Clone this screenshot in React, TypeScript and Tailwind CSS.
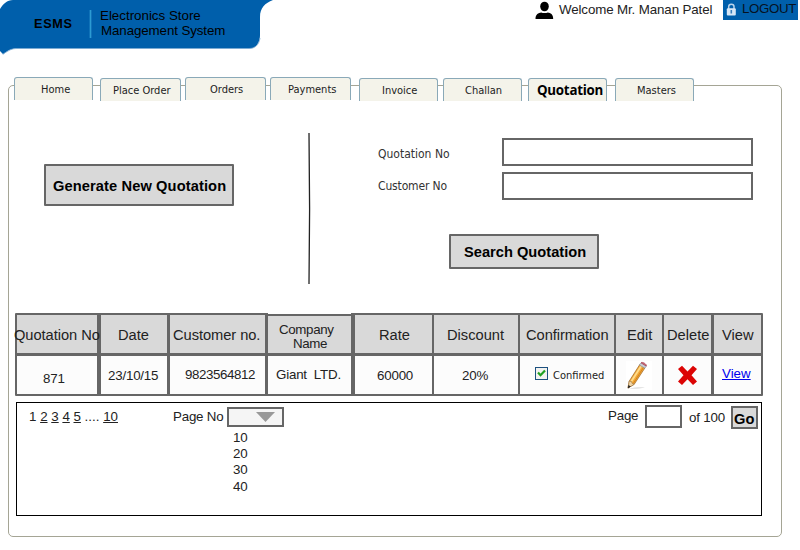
import type { ReactNode } from "react";

const sans = "font-['Liberation_Sans',Arial,sans-serif]";
const condensed = "font-['DejaVu_Sans_Condensed','DejaVu_Sans',sans-serif]";

function Label({ className = "", children }: { className?: string; children: ReactNode }) {
  return <span className={`block shrink-0 whitespace-pre leading-4 ${className}`}>{children}</span>;
}

const tabs = [
  { label: "Home", box: "w-[79px]", text: "ml-[26px]" },
  { label: "Place Order", box: "ml-[7px] mt-px w-[81px]", text: "ml-[12px]" },
  { label: "Orders", box: "ml-1 w-[81px]", text: "ml-[24px]" },
  { label: "Payments", box: "ml-1 w-[81px]", text: "ml-[17px]" },
  { label: "Invoice", box: "ml-2 mt-px w-[79px]", text: "ml-[22px]" },
  { label: "Challan", box: "ml-[5px] mt-px w-[79px]", text: "ml-[21px]" },
  { label: "Quotation", box: "ml-1.5 mt-px w-[79px]", text: "ml-[8px]", active: true },
  { label: "Masters", box: "ml-2 mt-px w-[79px]", text: "ml-[21px]" },
];

function Tabs() {
  return (
    <nav className="-mt-[9px] ml-[5px] flex h-[23px] items-start">
      {tabs.map((t) => (
        <div
          key={t.label}
          className={`h-[23px] shrink-0 rounded-t-[3px] border border-b-0 border-[#8aa9b8] bg-[#f4f3ea] ${t.box}`}
        >
          <Label
            className={
              t.active
                ? `mt-[3px] font-['Open_Sans','Noto_Sans',sans-serif] text-[13.33px] font-bold tracking-[-0.25px] text-black ${t.text}`
                : `mt-[4px] text-[11px] text-[#222] ${condensed} ${t.text}`
            }
          >
            {t.label}
          </Label>
        </div>
      ))}
    </nav>
  );
}

function Column({
  width,
  head,
  children,
  lowered = false,
}: {
  width: string;
  head: ReactNode;
  children: ReactNode;
  lowered?: boolean;
}) {
  return (
    <div className={`flex h-[83px] shrink-0 flex-col pt-[2px] ${lowered ? "border-t border-white" : ""} ${width}`}>
      <div className={`flex items-start bg-[#d9d9d9] ${lowered ? "h-[37px]" : "h-[38px]"}`}>{head}</div>
      <div className="mt-[3px] flex h-[38px] items-start bg-[#fcfcfc]">{children}</div>
    </div>
  );
}

function Banner() {
  return (
    <div className="relative h-[56px] w-[276px] shrink-0">
      <svg className="absolute inset-0" width="276" height="56" viewBox="0 0 276 56">
        <path
          d="M0 9C3 4 7 0 13 0H273C265 3 260 8 260 17V35C260 43 256 48.5 249 48.5H17C12 48.5 8 50 3 54.5L0 51Z"
          fill="#005fab"
        />
        <path d="M0 51L3 54L8 51C12 48.5 15 48.5 18 48.5H249C255 48.5 259 45 260 38" fill="none" stroke="#7ba9d2" strokeWidth="0.8" />
      </svg>
      <div className="relative flex items-start text-black">
        <Label className="ml-[34px] mt-[16px] w-[38px] text-[12.67px] font-bold tracking-[0.7px]">ESMS</Label>
        <div className="ml-[17px] mt-[10px] h-[28px] w-[3px] border-x border-[#1173b8] bg-[#2c9bd3]" />
        <div className="ml-[8px] mt-[8px] text-[13.33px]">
          <Label className="!leading-[15px]">Electronics Store</Label>
          <Label className="ml-px !leading-[15px] tracking-[-0.1px]">Management System</Label>
        </div>
      </div>
    </div>
  );
}

function Account() {
  return (
    <div className="ml-auto mr-[2px] flex items-start">
      <svg className="mt-px" width="19" height="19" viewBox="0 0 19 19">
        <ellipse cx="9.5" cy="5.5" rx="4.3" ry="4.8" fill="#000" />
        <path d="M0.5 18C0.5 12.8 3.5 12 6.2 11.4C8 12.2 11 12.2 12.8 11.4C15.5 12 18.2 12.8 18.2 18Z" fill="#000" />
      </svg>
      <Label className="ml-[5px] mt-[2px] w-[154px] text-[13.33px] tracking-[-0.12px] text-[#222]">Welcome Mr. Manan Patel</Label>
      <div className="ml-[10px] flex h-[20px] w-[75px] items-start bg-[#005fab]">
        <svg className="ml-[3px] mt-[3px]" width="11" height="13" viewBox="0 0 11 13">
          <path d="M2.7 6V3.6C2.7 0.4 8 0.4 8 3.6V6" fill="none" stroke="#b9d4ec" strokeWidth="1.5" />
          <rect x="0.8" y="5.2" width="9" height="7.3" rx="1" fill="#d7e7f6" />
          <path d="M5.3 7V10.5" stroke="#3b7ebb" strokeWidth="1.6" />
        </svg>
        <Label className="ml-[5px] mt-px text-[13.33px] tracking-[-0.4px] text-[#06121f]">LOGOUT</Label>
      </div>
    </div>
  );
}

function Pencil() {
  return (
    <svg className="ml-[10px] mt-[5px] bg-white" width="26" height="29" viewBox="0 0 26 29">
      <path d="M3 27.5C8 26.5 13 26 19 26.4C14 27.6 8 28 3 27.5Z" fill="#ddd" />
      <path d="M2 27L3.2 20.2L13.8 3.5L19 6.8L8.2 23.3Z" fill="#f2a93b" stroke="#9b621e" strokeWidth="0.7" />
      <path d="M5.3 20.6L15.2 5" stroke="#ffdc8b" strokeWidth="1.8" />
      <path d="M7.4 22.4L17.4 6.6" stroke="#d78419" strokeWidth="1" />
      <path d="M2 27L3.2 20.2L5.5 20.5L6 22.3L8.2 23.3Z" fill="#f1d5a5" stroke="#8a6a3c" strokeWidth="0.5" />
      <path d="M1.8 27.4L2.4 24L4.8 25.5Z" fill="#222" />
      <path d="M13.4 4L15 1.8L20.3 5L18.8 7.3Z" fill="#c9ccd4" stroke="#858993" strokeWidth="0.6" />
      <path d="M15 1.8C16 0.4 21 3 20.3 5Z" fill="#d46a78" stroke="#a84858" strokeWidth="0.8" />
    </svg>
  );
}

const head = "text-[14.67px] text-[#222]";
const cell = "text-[13.33px] tracking-[-0.2px] text-[#222]";

function QuotationTable() {
  return (
    <div className="ml-[6px] mt-[29px] flex h-[83px] w-[748px] items-start rounded-[1px] bg-[#666] pl-[2px]">
      <Column width="w-[80px] mr-1" head={<Label className={`relative z-10 -ml-[3px] mt-[12px] tracking-[-0.05px] ${head}`}>Quotation No</Label>}>
        <Label className={`ml-[26px] mt-[15px] ${cell}`}>871</Label>
      </Column>
      <Column width="w-[66px] mr-[3px]" head={<Label className={`ml-[17px] mt-[12px] ${head}`}>Date</Label>}>
        <Label className={`ml-[7px] mt-[12px] ${cell}`}>23/10/15</Label>
      </Column>
      <Column width="w-[95px] mr-[3px]" head={<Label className={`ml-[3px] mt-[12px] tracking-[-0.05px] ${head}`}>Customer no.</Label>}>
        <Label className="ml-[15px] mt-[11px] text-[13.33px] tracking-[-0.4px] text-[#222]">9823564812</Label>
      </Column>
      <Column
        lowered
        width="w-[83px] mr-1"
        head={
          <div className="text-[13.33px] tracking-[-0.35px] text-[#222]">
            <Label className="ml-[11px] mt-[7px] !leading-[14px]">Company</Label>
            <Label className="ml-[25px] !leading-[14px]">Name</Label>
          </div>
        }
      >
        <Label className={`ml-[8px] mt-[11px] ${cell}`}>{"Giant  LTD."}</Label>
      </Column>
      <Column width="w-[77px] mr-[2px]" head={<Label className={`ml-[24px] mt-[12px] ${head}`}>Rate</Label>}>
        <Label className={`ml-[22px] mt-[12px] ${cell}`}>60000</Label>
      </Column>
      <Column width="w-[84px] mr-[2px]" head={<Label className={`ml-[13px] mt-[12px] ${head}`}>Discount</Label>}>
        <Label className={`ml-[28px] mt-[12px] ${cell}`}>20%</Label>
      </Column>
      <Column width="w-[94px] mr-[2px]" head={<Label className={`ml-[6px] mt-[12px] tracking-[-0.05px] ${head}`}>Confirmation</Label>}>
        <svg className="ml-[15px] mt-[11px]" width="13" height="13" viewBox="0 0 13 13">
          <rect x="0.5" y="0.5" width="12" height="12" fill="#f3f3f0" stroke="#1d5180" />
          <path d="M3 5.5L5.5 8.2L10 3.4" fill="none" stroke="#21a121" strokeWidth="2.2" />
        </svg>
        <Label className={`ml-[5px] mt-[12px] text-[11px] text-[#222] ${condensed}`}>Confirmed</Label>
      </Column>
      <Column width="w-[46px] mr-[2px]" head={<Label className={`ml-[11px] mt-[12px] ${head}`}>Edit</Label>}>
        <Pencil />
      </Column>
      <Column width="w-[47px] mr-[3px]" head={<Label className={`ml-[3px] mt-[12px] ${head}`}>Delete</Label>}>
        <svg className="ml-[13px] mt-[9px]" width="21" height="21" viewBox="0 0 21 21">
          <path d="M1 4L5 0.8L10.5 6.5L16 0.8L20 4L14.5 10.3L20 16.5L16 20L10.5 14.2L5 20L1 16.5L6.5 10.3Z" fill="#dc0505" />
        </svg>
      </Column>
      <Column width="w-[47px]" head={<Label className={`ml-[8px] mt-[12px] ${head}`}>View</Label>}>
        <Label className="ml-[8px] mt-[10px] text-[13.33px] text-[#0000ee] underline">View</Label>
      </Column>
    </div>
  );
}

function SearchArea() {
  return (
    <div className="flex h-[184px] items-start">
      <button className="ml-[35px] mt-[64px] h-[42px] w-[190px] shrink-0 rounded-[1px] border-2 border-[#666] bg-[#d9d9d9]">
        <Label className="ml-[7px] mt-[2px] text-left text-[14.67px] font-bold tracking-[0.1px] text-black">Generate New Quotation</Label>
      </button>
      <svg className="ml-[73px] mt-[33px] shrink-0" width="5" height="151" viewBox="0 0 5 151">
        <path d="M2 0L2.6 76L2 151" fill="none" stroke="#222" strokeWidth="1.3" />
      </svg>
      <div className="ml-[66px] mt-[38px] w-[375px]">
        <div className="flex items-start">
          <Label className={`mt-[8px] w-[124px] text-[12px] text-[#333] ${condensed}`}>Quotation No</Label>
          <div className="h-[28px] w-[251px] border-2 border-[#666]" />
        </div>
        <div className="mt-[6px] flex items-start">
          <Label className={`mt-[6px] w-[124px] text-[12px] tracking-[-0.15px] text-[#333] ${condensed}`}>Customer No</Label>
          <div className="h-[28px] w-[251px] border-2 border-[#666]" />
        </div>
        <button className="ml-[71px] mt-[34px] block h-[35px] w-[150px] rounded-[1px] border-2 border-[#666] bg-[#d9d9d9]">
          <Label className="ml-[13px] mt-px text-left text-[14.67px] font-bold text-black">Search Quotation</Label>
        </button>
      </div>
    </div>
  );
}

function Pager() {
  return (
    <div className="ml-[7px] mt-[6px] flex h-[114px] w-[746px] items-start border border-black text-[13.33px] text-[#222]">
      <Label className="ml-[12px] mt-[6px] w-[144px]">
        1 <u>2</u> <u>3</u> <u>4</u> <u>5</u> .... <u>10</u>
      </Label>
      <Label className="mt-[6px] w-[54px] tracking-[-0.2px]">Page No</Label>
      <div className="mt-[4px] w-[57px] shrink-0">
        <div className="h-[20px] border-2 border-[#666] bg-[#f5f5f5]">
          <svg className="ml-[27px] mt-[3px]" width="19" height="10" viewBox="0 0 19 10">
            <path d="M0 0H19L9.5 10Z" fill="#999" />
          </svg>
        </div>
        <div className="ml-[6px] mt-[3px] tracking-[-0.2px]">
          <Label>10</Label>
          <Label>20</Label>
          <Label>30</Label>
          <Label className="mt-px">40</Label>
        </div>
      </div>
      <Label className="ml-[324px] mt-[5px] w-[37px] tracking-[-0.2px]">Page</Label>
      <div className="mt-[2px] h-[23px] w-[37px] shrink-0 border-2 border-[#666]" />
      <Label className="ml-[7px] mt-[7px] w-[42px] tracking-[-0.2px]">of 100</Label>
      <button className="mt-[3px] h-[23px] w-[27px] shrink-0 border-2 border-[#666] bg-[#d9d9d9]">
        <Label className="ml-px mt-[2px] text-left text-[14.67px] font-bold text-black">Go</Label>
      </button>
    </div>
  );
}

export default function App() {
  return (
    <div className={`h-[550px] w-[800px] overflow-hidden bg-white ${sans}`}>
      <header className="flex h-[85px] items-start">
        <Banner />
        <Account />
      </header>
      <main className="ml-[8px] h-[452px] w-[774px] rounded-[5px] border border-[#a5a595]">
        <Tabs />
        <SearchArea />
        <QuotationTable />
        <Pager />
      </main>
    </div>
  );
}
